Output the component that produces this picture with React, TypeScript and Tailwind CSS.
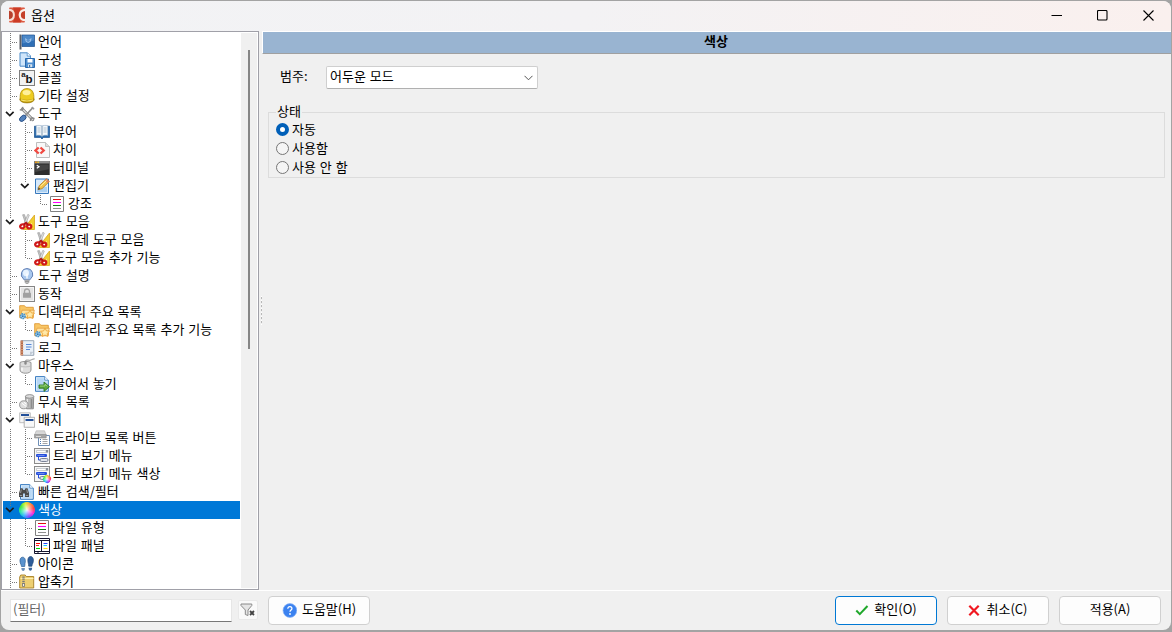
import React from 'react';
import type { ReactNode } from 'react';

type Guide = '|' | '+' | 'L' | 'v' | ' ';

interface TreeItem {
  label: string;
  icon: keyof typeof ICONS;
  // one character per level: | line, + branch, L last branch, v expanded
  guides: string;
  selected?: boolean;
}

const scissors = (
  <>
    <path d="M15.5 1v14.5H4z" fill="#f2cf2f" stroke="#d9a520" strokeWidth=".8" />
    <path d="M12.8 8.5v4.5H9.5z" fill="#fff3a8" />
    <path d="M3.6.8l1.8-.3 3.2 8.5-1.8 1.3z" fill="#c4c4c4" stroke="#888" strokeWidth=".5" />
    <path d="M8.8.3l1.5.8-3.6 9-1.7-.8z" fill="#e3e3e3" stroke="#888" strokeWidth=".5" />
    <ellipse cx="3.4" cy="12.3" rx="2.2" ry="1.9" transform="rotate(-35 3.4 12.3)" fill="#fff" stroke="#d01a1a" strokeWidth="2.2" />
    <ellipse cx="10.2" cy="12.6" rx="2.1" ry="1.9" fill="#fff" stroke="#d01a1a" strokeWidth="2.2" />
    <path d="M5 10.5l2-1.6 2 1.8" fill="none" stroke="#b61212" strokeWidth="2" />
  </>
);

const starFolder = (
  <>
    <path d="M.7 1.7h4.8l1.3 1.6h7.5v10.3H.7z" fill="#f9c766" stroke="#e09a34" strokeWidth=".9" />
    <path d="M3 6.2h12.3l-1.6 7.5H1.4z" fill="#ffe3a0" stroke="#e3a044" strokeWidth=".8" />
    <path d="M11 6l1.4 2.9 3.1.4-2.3 2.1.6 3.1-2.8-1.5-2.8 1.5.6-3.1-2.3-2.1 3.1-.4z" fill="#ffe9a8" stroke="#eda53a" strokeWidth=".9" />
    <circle cx="3.8" cy="12.2" r="2.3" fill="#a6d2f2" stroke="#4b93ca" strokeWidth="1.7" strokeDasharray="1.5 .6" />
    <circle cx="3.8" cy="12.2" r=".9" fill="#2f77b0" />
  </>
);

const treeMenu = (
  <>
    <rect x=".5" y=".5" width="15" height="15" fill="#f6f6f6" stroke="#8b8b8b" />
    <path d="M2.5 2.5h9.5v2H2.5z" fill="#fff" stroke="#b5bac0" strokeWidth=".7" />
    <path d="M12 2h2.2v2.6H12z" fill="#8a929c" />
    <rect x="2" y="6" width="11" height="3" rx="1" fill="#2850dc" />
    <path d="M3.5 7.5h7" stroke="#7f9af0" strokeWidth=".8" />
    <path d="M4.5 9v3h2" fill="none" stroke="#2850dc" />
    <rect x="6" y="10.5" width="8" height="3" rx="1.4" fill="#dfe3ec" stroke="#7a8296" />
  </>
);

const colourList = (
  <>
    <path d="M1.5.5h13v15h-13z" fill="#fff" stroke="#808080" />
    <path d="M4 3.5h8" stroke="#e01010" />
    <path d="M4 6.5h8" stroke="#f0f" strokeWidth="1.1" />
    <path d="M4 9.5h8" stroke="#108010" />
    <path d="M4 12.5h8" stroke="#909090" />
  </>
);

const bluePage = (
  <>
    <path d="M1.5.6h9.2l3.6 3.6v11.1H1.5z" fill="#d8eafb" stroke="#3b7cc0" />
    <path d="M3 2.2h6.8v3.2h3v8.4H3z" fill="#b7d7f5" />
    <path d="M10.7.6v3.6h3.6" fill="#fff" stroke="#3b7cc0" strokeWidth=".8" />
  </>
);

function Wheel({ className }: { className: string }) {
  return (
    <span
      className={`${className} block rounded-full bg-[radial-gradient(circle,rgba(255,255,255,.9)_0,rgba(255,255,255,0)_62%),conic-gradient(#ff8a3c,#ff4040,#ff28d8,#7a4cff,#28b4ff,#28e8a0,#38e838,#d8f030,#ff8a3c)] [transform:rotate(30deg)]`}
    />
  );
}

const ICONS = {
  flag: (
    <>
      <path d="M.5.5h2v15h-2z" fill="#5a5f66" />
      <path d="M3 1h12.5v11.5H3z" fill="#2f6fb5" stroke="#1c4f8c" strokeWidth=".7" />
      <path d="M3.5 1.4h11.5v5l-11.5 3z" fill="#4c88c8" />
      <path d="M6 4c0 6.500 6.500 6.500 6.500 0L9.300 6z" fill="#9cc1e8" />
      <circle cx="9.2" cy="6.3" r="1.6" fill="#5e94d0" />
    </>
  ),
  config: (
    <>
      <path d="M1 .8h7.4l3 3v10.4H1z" fill="#cfe5fa" stroke="#4a8ac8" />
      <path d="M8.2.8v3.3h3.2" fill="#fff" stroke="#4a8ac8" strokeWidth=".8" />
      <path d="M6.5 6.5h9v9h-9z" fill="#4f8fd0" stroke="#2869ae" />
      <path d="M8.5 7h5v3.5h-5z" fill="#fff" />
      <path d="M9 12.2h4.2v3H9z" fill="#dbe6f0" />
      <path d="M10 13h1.2v2H10z" fill="#3a6ea5" />
    </>
  ),
  font: (
    <>
      <rect x=".5" y=".5" width="15" height="15" fill="#f2f2f2" stroke="#808080" />
      <text x="2.3" y="7.4" fontSize="8" fontWeight="700" fontFamily="Liberation Sans" fill="#222">a</text>
      <text x="6.5" y="13.4" fontSize="11.5" fontWeight="700" fontFamily="Liberation Sans" fill="#111">b</text>
    </>
  ),
  helmet: (
    <>
      <ellipse cx="8" cy="11.5" rx="7.2" ry="3.4" fill="#c59e08" stroke="#937204" strokeWidth=".7" />
      <path d="M1.2 10.8C.7 4 3.2.6 8 .6s7.3 3.4 6.8 10.2c-3 2-10.6 2-13.6 0z" fill="#edcc22" stroke="#ae8a08" strokeWidth=".8" />
      <ellipse cx="7.6" cy="4.6" rx="4" ry="2.7" fill="#fff09a" />
      <path d="M2 11.8c3 1.6 9 1.6 12 0" fill="none" stroke="#f8e670" strokeWidth="1.2" />
    </>
  ),
  tools: (
    <>
      <path d="M3.3 3l10.5 10.8" stroke="#777" strokeWidth="2.8" strokeLinecap="round" />
      <path d="M3.3 3l10.5 10.8" stroke="#d8d8d8" strokeWidth="1.5" strokeLinecap="round" />
      <path d="M.8 3.8l2.3.2.9-.9L3.5.8M11.4 15l.5-2.8 1.3-.5 2.3 1" fill="none" stroke="#8a8a8a" strokeWidth="1.5" />
      <path d="M14 1.5L6.5 9.5" stroke="#8e8e8e" strokeWidth="1.7" />
      <path d="M12.8 1l2.3 2.3" stroke="#999" strokeWidth="1.5" />
      <ellipse cx="3.8" cy="12.3" rx="3.8" ry="2.4" transform="rotate(-42 3.8 12.3)" fill="#5382bd" stroke="#264d84" strokeWidth=".9" />
    </>
  ),
  book: (
    <>
      <path d="M.4 2.2h15.2v11.2H9.5L8 15l-1.5-1.6H.4z" fill="#2769ae" stroke="#174d88" strokeWidth=".7" />
      <path d="M2.2 1.7C4.5 1 7 1.4 8 2.6c1-1.2 3.5-1.6 5.8-.9v9.7c-2.3-.5-4.8-.2-5.8 1-1-1.2-3.5-1.5-5.8-1z" fill="#f4f8fc" stroke="#8da7bf" strokeWidth=".5" />
      <path d="M8 2.6v9.5" stroke="#7d98b2" />
      <path d="M3.5 4h3M3.5 6h3M3.5 8h3M9.5 4h3M9.5 6h3M9.5 8h3" stroke="#a5b6c5" strokeWidth=".8" />
    </>
  ),
  diff: (
    <>
      <path d="M2.5.5h9l4 4v11h-13z" fill="#f8f8f8" stroke="#bdbdbd" />
      <path d="M11.5.5v4h4" fill="#ddd" stroke="#b8b8b8" strokeWidth=".8" />
      <path d="M4.7 5.5L1.500 8.500l3.200 3M6.500 5.500l3.200 3-3.200 3" fill="none" stroke="#f04a42" strokeWidth="2.3" />
    </>
  ),
  terminal: (
    <>
      <path d="M.3 1h15.4v14H.3z" fill="#2c2c2c" />
      <path d="M.3 1h15.4v2.6H.3z" fill="#8e8e8e" />
      <path d="M1 1.5h2V3H1z" fill="#e7971b" />
      <path d="M3.5 1.5H5V3H3.5z" fill="#e9c430" />
      <path d="M1.3 4.5h13.4v4.8L1.3 12z" fill="#454545" />
      <path d="M2.8 5.3L5 6.8 2.8 8.3" fill="none" stroke="#fff" strokeWidth="1.2" />
    </>
  ),
  editor: (
    <>
      <path d="M1.5 1h13v14.5h-13z" fill="#d9eafa" stroke="#3879bd" />
      <path d="M3 9h10v5H3z" fill="#abd0f1" />
      <path d="M4 11.7l1.2-4L12.5.8l2.8 2.8L8 10.7z" fill="#f3c24a" stroke="#b47b24" strokeWidth=".8" />
      <path d="M12.5.8l2.8 2.8-1.5 1.4L11 2.200z" fill="#df7f62" />
      <path d="M6.5 8.3l6-5.800" stroke="#fff0a0" />
      <path d="M4 11.7l.7-2.2 1.5 1.5z" fill="#443b33" />
    </>
  ),
  list: colourList,
  scissors,
  bulb: (
    <>
      <path d="M8 .5a5.8 5.8 0 0 0-3.5 10.4l.9 1.1h5.2l.9-1.1A5.800 5.800 0 0 0 8 .5z" fill="#a9c8ee" stroke="#6482b6" />
      <ellipse cx="7" cy="5" rx="3" ry="3.2" fill="#e8f3ff" />
      <path d="M8 5.5v5" stroke="#fff" strokeWidth="1.3" />
      <path d="M5.7 11.7h4.6v2.8L9 15.7H7l-1.3-1.2z" fill="#888" />
      <path d="M5.8 12.8h4.4M6.2 14.5h3.6" stroke="#ddd" strokeWidth=".6" />
    </>
  ),
  lock: (
    <>
      <rect x=".5" y=".5" width="15" height="15" fill="#e3e3e3" stroke="#858585" />
      <rect x="1.5" y="1.5" width="13" height="13" fill="none" stroke="#f5f5f5" />
      <path d="M5.5 7V5.5a2.5 2.5 0 0 1 5 0V7" fill="none" stroke="#a5a5a5" strokeWidth="1.3" />
      <rect x="4" y="6.8" width="8" height="5" rx=".5" fill="#a0a0a0" />
    </>
  ),
  starFolder,
  log: (
    <>
      <path d="M2.5.7h12.3v14.6H2.5z" fill="#e9f0f8" stroke="#98a5b5" />
      <path d="M1.5.5H4v15H1.5z" fill="#b46a4c" />
      <path d="M1 2h3.5M1 4.5h3.5M1 7h3.5M1 9.5h3.5M1 12h3.5M1 14.5h3.5" stroke="#e0a884" strokeWidth=".8" />
      <path d="M7 4.5h5.5M7 7h5.5M7 9.5h4" stroke="#5687d8" strokeWidth="1.2" />
      <path d="M11 15.3v-3.5h3.8z" fill="#c1cad5" />
    </>
  ),
  mouse: (
    <>
      <path d="M6.5 4C7 .8 9 2.6 11 2.3S14 .5 15.7 1" fill="none" stroke="#aaa" strokeWidth="1.3" />
      <path d="M1 4.500c1.800-1.500 9.200-1.500 11 0V12c0 4.300-11 4.300-11 0z" fill="#dedede" stroke="#8c8c8c" strokeWidth=".9" />
      <path d="M1.300 8c3 1.200 7.400 1.200 10.400 0" fill="none" stroke="#b5b5b5" strokeWidth=".8" />
      <rect x="5.3" y="2.8" width="2.4" height="4" rx="1.2" fill="#8a8a8a" />
      <path d="M3 9.8v3" stroke="#fff" strokeWidth="1.3" />
    </>
  ),
  drag: (
    <>
      {bluePage}
      <path d="M5 9h5V6l5.5 4.7-5.5 4.7v-3.2H5z" fill="#5ba83e" stroke="#2f7723" strokeWidth=".9" />
      <path d="M6 10h5V8.3l2.3 2" fill="none" stroke="#a8dc8c" strokeWidth=".8" />
    </>
  ),
  bin: (
    <>
      <path d="M6.5 2.5h8.2l-.4 12.3H7.5z" fill="#b8b8b8" stroke="#858585" strokeWidth=".9" />
      <path d="M8.3 5v9" stroke="#e8e8e8" strokeWidth="1.4" />
      <path d="M12.5 5v9" stroke="#8d8d8d" strokeWidth="1.6" />
      <ellipse cx="10.6" cy="2.4" rx="4.2" ry="1.8" fill="#dcdcdc" stroke="#808080" strokeWidth=".8" />
      <ellipse cx="4.8" cy="10.8" rx="4.2" ry="4" fill="#dedede" stroke="#8f8f8f" strokeWidth=".9" />
      <path d="M3 9.3l4 3M5 8.3l2.3 1.7" stroke="#fff" />
    </>
  ),
  layout: (
    <>
      <path d="M.7.8h10.6v9.9H.7z" fill="#f3f3f3" stroke="#b0b0b0" strokeWidth=".8" />
      <path d="M2 2h8v2H2z" fill="#23509a" />
      <path d="M5.2 5.3h10.4v10H5.2z" fill="#f8f8f8" stroke="#a0a0a0" strokeWidth=".8" />
      <path d="M6.5 7h8v2h-8z" fill="#23509a" />
    </>
  ),
  drive: (
    <>
      <path d="M4.5 5.5h11v10h-11z" fill="#fff" stroke="#6f8fb6" />
      <path d="M8.5 9.5h5M8.5 11.5h5M8.5 13.5h5" stroke="#9a9a9a" strokeWidth=".9" />
      <path d="M6 9.5h1M6 11.5h1M6 13.5h1" stroke="#4578b5" />
      <path d="M2.2.8h8.3l1.7 4.2H.5z" fill="#d8d8d8" stroke="#b0b0b0" strokeWidth=".6" />
      <path d="M.5 4.5h11.7V8H.5z" fill="#a5a5a5" stroke="#8c8c8c" strokeWidth=".6" />
      <path d="M2 6.5h5" stroke="#ddd" />
    </>
  ),
  treeMenu,
  treeMenuColour: treeMenu,
  search: (
    <>
      {bluePage}
      <path d="M1.5 4.2h2l.8 1.8h1.400l.8-1.800h2L10 9v4H6V9.500H4V13H0V9z" fill="#4a4a4a" />
      <path d="M2.3 5.5L1.5 9M7.7 5.5L8.5 9" stroke="#aaa" strokeWidth=".8" />
      <path d="M.8 11.5h2.4M6.8 11.5h2.4" stroke="#999" />
    </>
  ),
  wheel: null,
  panels: (
    <>
      <path d="M.5.5h15v15H.5z" fill="#fff" stroke="#15152f" />
      <path d="M1 2.5h14" stroke="#15152f" />
      <path d="M7.5 3v10M0 13.5h16M4 13v3" stroke="#15152f" />
      <path d="M2 5.5h4" stroke="#f00" />
      <path d="M2 7.5h3" stroke="#f22" />
      <path d="M2 10.5h4" stroke="#0d0" />
      <path d="M9.5 5.5h4" stroke="#24f" />
      <path d="M9.5 7.5H13" stroke="#0cf" />
      <path d="M9.5 10.5h4" stroke="#fd0" />
    </>
  ),
  feet: (
    <>
      <path d="M1.3 7C.3 3.5 1.5 1.2 3.6 1.2S7 3.5 6 7.5c-.2 1.3 0 2-.3 3H2.5c0-1.3-.7-2-1.2-3.5z" fill="#5992ce" stroke="#2d6097" strokeWidth=".7" />
      <path d="M2.3 12h3.6c.3 4-3.6 4-3.6 0z" fill="#6a8fba" />
      <path d="M9.2 7C8.2 3 9.5.5 11.6.5S15 3 14.1 6.5c-.5 1.5-1.2 2.2-1.2 3.7H9.7c-.2-1 0-2-.5-3.2z" fill="#2f5d99" stroke="#1f4779" strokeWidth=".7" />
      <path d="M9.5 11.8h3.6c.2 4-3.6 4-3.6 0z" fill="#3b669d" />
    </>
  ),
  archive: (
    <>
      <path d="M.7 3l1-2h4.5l1 1.5h7.5V14H.7z" fill="#edcf72" stroke="#a77f25" strokeWidth=".9" />
      <path d="M1.5 4.5h13" stroke="#fff0af" />
      <path d="M4.5 2.5v9" stroke="#777" strokeWidth="2.4" strokeDasharray="1.2 .9" />
      <path d="M3.5 9.5h2v3h-2z" fill="#eee" stroke="#666" strokeWidth=".7" />
    </>
  ),
} satisfies Record<string, ReactNode>;

const TREE: TreeItem[] = [
  { label: '언어', icon: 'flag', guides: '+' },
  { label: '구성', icon: 'config', guides: '+' },
  { label: '글꼴', icon: 'font', guides: '+' },
  { label: '기타 설정', icon: 'helmet', guides: '+' },
  { label: '도구', icon: 'tools', guides: 'v' },
  { label: '뷰어', icon: 'book', guides: '|+' },
  { label: '차이', icon: 'diff', guides: '|+' },
  { label: '터미널', icon: 'terminal', guides: '|+' },
  { label: '편집기', icon: 'editor', guides: '|v' },
  { label: '강조', icon: 'list', guides: '| L' },
  { label: '도구 모음', icon: 'scissors', guides: 'v' },
  { label: '가운데 도구 모음', icon: 'scissors', guides: '|+' },
  { label: '도구 모음 추가 기능', icon: 'scissors', guides: '|L' },
  { label: '도구 설명', icon: 'bulb', guides: '+' },
  { label: '동작', icon: 'lock', guides: '+' },
  { label: '디렉터리 주요 목록', icon: 'starFolder', guides: 'v' },
  { label: '디렉터리 주요 목록 추가 기능', icon: 'starFolder', guides: '|L' },
  { label: '로그', icon: 'log', guides: '+' },
  { label: '마우스', icon: 'mouse', guides: 'v' },
  { label: '끌어서 놓기', icon: 'drag', guides: '|L' },
  { label: '무시 목록', icon: 'bin', guides: '+' },
  { label: '배치', icon: 'layout', guides: 'v' },
  { label: '드라이브 목록 버튼', icon: 'drive', guides: '|+' },
  { label: '트리 보기 메뉴', icon: 'treeMenu', guides: '|+' },
  { label: '트리 보기 메뉴 색상', icon: 'treeMenuColour', guides: '|L' },
  { label: '빠른 검색/필터', icon: 'search', guides: '+' },
  { label: '색상', icon: 'wheel', guides: 'v', selected: true },
  { label: '파일 유형', icon: 'list', guides: '|+' },
  { label: '파일 패널', icon: 'panels', guides: '|L' },
  { label: '아이콘', icon: 'feet', guides: '+' },
  { label: '압축기', icon: 'archive', guides: '+' },
];

const GUIDE_PATHS: Record<Guide, string> = {
  '|': 'M8.5 0v18',
  '+': 'M8.5 0v18M10 9.5h6',
  L: 'M8.5 0v10M10 9.5h6',
  v: 'M8.5 0v6',
  ' ': '',
};

function GuideCell({ kind }: { kind: Guide }) {
  return (
    <svg width="15" height="18" viewBox="0 0 15 18" className="shrink-0" fill="none">
      <path d={GUIDE_PATHS[kind]} stroke="#777" strokeDasharray="1 1" />
      {kind === 'v' && <path d="M4 6.8l3.8 3.7 3.8-3.7" stroke="#1c1c1c" strokeWidth="1.7" />}
    </svg>
  );
}

function ItemIcon({ name }: { name: TreeItem['icon'] }) {
  if (name === 'wheel') return <Wheel className="size-4 shrink-0" />;
  return (
    <span className="relative size-4 shrink-0">
      <svg width="16" height="16" viewBox="0 0 16 16" className="block">{ICONS[name]}</svg>
      {name === 'treeMenuColour' && <Wheel className="absolute -right-px -bottom-px size-2" />}
    </span>
  );
}

function TreeRow({ item }: { item: TreeItem }) {
  return (
    <div className={`flex h-[18px] shrink-0 items-center ${item.selected ? 'bg-[#0078d7] text-white' : ''}`}>
      <div className="-ml-px flex">
        {item.guides.split('').map((g, i) => <GuideCell key={i} kind={g as Guide} />)}
      </div>
      <div className="ml-0.5 flex items-center gap-[3px]">
        <ItemIcon name={item.icon} />
        <span className="-mt-0.5 whitespace-nowrap leading-[14px]">{item.label}</span>
      </div>
    </div>
  );
}

function TitleBar() {
  return (
    <header className="flex h-[30px] shrink-0 items-center bg-linear-to-r from-[#f2f3f5] via-[#f3f2f4] to-[#faf0ee] pb-0.5 pl-2">
      <svg width="16" height="16" viewBox="0 0 16 16" className="shrink-0">
        <rect y=".5" width="16" height="15" rx="1" fill="#dc5a42" />
        <path d="M4 .5h8L9.5 7.5 12 15.5H4l2-8z" fill="#cc3c26" />
        <path d="M0 2.800c6.500.5 6.500 9.900 0 10.400" fill="#b8402c" stroke="#f7ddd2" strokeWidth="2" />
        <path d="M16 2.800c-7 .5-7 9.900 0 10.400" fill="#c5402a" stroke="#fbeee8" strokeWidth="2.2" />
      </svg>
      <h1 className="ml-[6px] flex-1 leading-5">옵션</h1>
      <div className="flex text-black">
        <button className="grid h-[28px] w-[45px] place-items-center" aria-label="최소화">
          <svg width="11" height="11" viewBox="0 0 11 11"><path d="M.5 5.5H11" stroke="currentColor" /></svg>
        </button>
        <button className="grid h-[28px] w-[46px] place-items-center" aria-label="최대화">
          <svg width="11" height="11" viewBox="0 0 11 11"><rect x=".5" y=".5" width="9.5" height="9.5" rx="1" fill="none" stroke="currentColor" strokeWidth="1.1" /></svg>
        </button>
        <button className="grid h-[28px] w-[46px] place-items-center" aria-label="닫기">
          <svg width="11" height="11" viewBox="0 0 11 11"><path d="M.5.5l10 10M10.5.5l-10 10" stroke="currentColor" strokeWidth="1.1" /></svg>
        </button>
      </div>
    </header>
  );
}

function Radio({ label, checked }: { label: string; checked?: boolean }) {
  return (
    <label className="flex h-[19px] items-center gap-[3px]">
      <span
        className={
          checked
            ? 'size-[13px] rounded-full border-4 border-[#005fb8] bg-white'
            : 'size-[13px] rounded-full border border-[#767676] bg-[#f5f5f5]'
        }
      />
      <span className="-mt-0.5 leading-[18px]">{label}</span>
    </label>
  );
}

function DialogButton({ icon, label, primary }: { icon?: ReactNode; label: string; primary?: boolean }) {
  return (
    <button
      className={`flex h-[29px] w-[102px] items-center justify-center gap-[5px] rounded border bg-[#fdfdfd] ${
        primary ? 'border-[#0078d4]' : 'border-[#d0d0d0]'
      }`}
    >
      {icon}
      <span className="-mt-[3px]">{label}</span>
    </button>
  );
}

export default function App() {
  return (
    <div className="h-[632px] w-[1172px] overflow-hidden bg-[#a3a3a3] pt-px pl-px font-['Noto_Sans_CJK_KR',sans-serif] text-[13px] leading-4 text-black [word-spacing:1px]">
      <div className="flex h-[629px] w-[1170px] flex-col overflow-hidden rounded-lg bg-[#f0f0f0]">
        <TitleBar />

        <div className="flex h-[559px] shrink-0">
          {/* Category tree */}
          <nav className="flex w-[258px] shrink-0 overflow-hidden border border-[#a0a0a8] bg-white">
            <div className="flex w-[238px] shrink-0 flex-col overflow-hidden pt-px pl-px">
              {TREE.map(item => <TreeRow key={item.label} item={item} />)}
            </div>
            <div className="my-px ml-px flex w-4 justify-center bg-[#f0f0f0] pt-[17px]">
              <div className="h-[299px] w-0.5 bg-[#868686]" />
            </div>
          </nav>

          {/* Splitter */}
          <div className="flex w-[3px] shrink-0 items-center justify-end">
            <div className="h-[29px] w-px bg-[repeating-linear-gradient(to_bottom,#fff_0_1px,#b8b8b8_1px_3px,transparent_3px_4px)]" />
          </div>

          <main className="flex min-w-0 flex-1 flex-col">
            <h2 className="flex h-[23px] shrink-0 items-center justify-center border-t border-b border-l border-t-white border-b-[#a0a0a0] border-l-white bg-[#99b4d1] pr-0.5 text-[13px] font-bold">
              <span className="-mt-1">색상</span>
            </h2>

            <div className="flex items-center pt-3 pl-[18px]">
              <span className="-mt-1 w-[46px]">범주:</span>
              <div className="flex h-[23px] w-[212px] items-center justify-between rounded-xs border border-[#cfcfcf] border-b-[#b0b0b0] bg-white pr-1 pl-[3px]">
                <span className="-mt-[3px]">어두운 모드</span>
                <svg width="9" height="6" viewBox="0 0 9 6" fill="none"><path d="M.5.8l4 4 4-4" stroke="#555" /></svg>
              </div>
            </div>

            <fieldset className="mt-[15px] mr-1.5 ml-1.5 h-[74px] border border-[#dcdcdc] pl-[7px]">
              <legend className="h-4 px-px leading-[14px]">상태</legend>
              <Radio label="자동" checked />
              <Radio label="사용함" />
              <Radio label="사용 안 함" />
            </fieldset>
          </main>
        </div>

        <footer className="flex flex-1 items-start border-t border-white pt-[5px] pl-[9px]">
          <div className="mt-[3px] flex h-[23px] w-[222px] items-center border border-[#e6e6e6] border-b-[#777] bg-white pl-0.5 text-[#666]">
            <span className="-mt-1">(필터)</span>
          </div>
          <button className="mt-1 ml-1.5 grid size-5 place-items-center rounded-xs border border-[#e9e9e9] bg-[#fafafa]" aria-label="필터 지우기">
            <svg width="16" height="16" viewBox="0 0 16 16" fill="none">
              <path d="M1 2h10.8v1.5L8 8v5.5l-2.7-1V8L1 3.5z" fill="#e5e5e5" stroke="#8a8a8a" />
              <path d="M10 9l4 4M14 9l-4 4" stroke="#444" strokeWidth="1.8" />
            </svg>
          </button>

          <div className="ml-2.5 flex flex-1">
            <DialogButton
              label="도움말(H)"
              icon={
                <svg width="15" height="15" viewBox="0 0 15 15" className="-mt-px">
                  <circle cx="7.9" cy="7.5" r="6.9" fill="#3b82f0" stroke="#8bb5f7" strokeWidth=".7" />
                  <path d="M5.8 5.7c.2-3 4.5-2.5 4.1.1-.2 1.2-1.9 1.3-1.9 3" fill="none" stroke="#fff" strokeWidth="1.3" />
                  <circle cx="8" cy="11" r=".9" fill="#fff" />
                </svg>
              }
            />
          </div>

          <div className="flex gap-2.5 pr-2.5">
            <DialogButton
              primary
              label="확인(O)"
              icon={
                <svg width="14" height="14" viewBox="0 0 14 14" fill="none" className="-mt-0.5">
                  <path d="M1.3 7.5l3.5 3.6L12.5 3" stroke="#1fa82b" strokeWidth="2" />
                </svg>
              }
            />
            <DialogButton
              label="취소(C)"
              icon={
                <svg width="13" height="13" viewBox="0 0 13 13" fill="none">
                  <path d="M1.3 1.8l9.4 9.4M10.7 1.8L1.3 11.2" stroke="#f01820" strokeWidth="2.2" />
                </svg>
              }
            />
            <DialogButton label="적용(A)" />
          </div>
        </footer>
      </div>
    </div>
  );
}
